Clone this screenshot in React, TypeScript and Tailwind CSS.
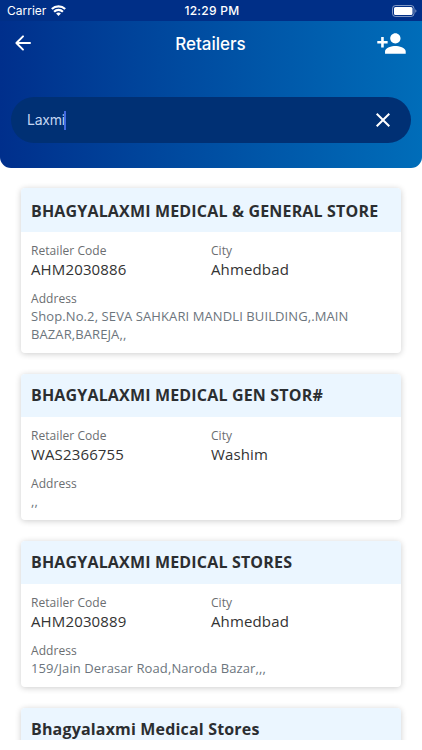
import React from "react";

type Retailer = { name: string; code: string; city: string; address: string; height: string; heading: string };

const retailers: Retailer[] = [
  { name: "BHAGYALAXMI MEDICAL & GENERAL STORE", code: "AHM2030886", city: "Ahmedbad", address: "Shop.No.2, SEVA SAHKARI MANDLI BUILDING,.MAIN BAZAR,BAREJA,,", height: "h-[165px]", heading: "h-[44px] leading-[46px]" },
  { name: "BHAGYALAXMI MEDICAL GEN STOR#", code: "WAS2366755", city: "Washim", address: ",,", height: "h-[146px]", heading: "h-[43px] leading-[43px]" },
  { name: "BHAGYALAXMI MEDICAL STORES", code: "AHM2030889", city: "Ahmedbad", address: "159/Jain Derasar Road,Naroda Bazar,,,", height: "h-[146px]", heading: "h-[43px] leading-[43px]" },
  { name: "Bhagyalaxmi Medical Stores", code: "", city: "", address: "", height: "h-[146px]", heading: "h-[43px] leading-[43px]" },
];

function StatusBar() {
  return (
    <div className="grid h-[21px] grid-cols-3 items-center bg-[#002f87] pl-[7px] pr-[5px] text-[12px] text-white">
      <div className="flex items-center gap-[5px]">
        <span className="pt-px text-[12px] leading-[18px]">Carrier</span>
        <svg width="15" height="11" viewBox="0 0 15 11" fill="none" stroke="white" strokeWidth="2.1">
          <path d="M0.8 4.1a9.6 9.6 0 0 1 13.4 0" />
          <path d="M3.1 6.7a6.2 6.2 0 0 1 8.8 0" />
          <path d="M7.5 11 5.1 8.6a3.4 3.4 0 0 1 4.8 0z" fill="white" stroke="none" />
        </svg>
      </div>
      <span className="pt-px text-center text-[12px] leading-[18px] font-medium tracking-[0.3px]">12:29 PM</span>
      <svg className="justify-self-end" width="25" height="12" viewBox="0 0 25 12">
        <rect x="0.5" y="0.5" width="21.5" height="11" rx="3" fill="none" stroke="white" strokeOpacity="0.5" />
        <rect x="2" y="2" width="18.5" height="8" rx="1.5" fill="white" />
        <path d="M23.3 4.3c1.5.4 1.5 3 0 3.4z" fill="white" fillOpacity="0.5" />
      </svg>
    </div>
  );
}

function Header() {
  return (
    <header className="h-[168px] shrink-0 overflow-hidden rounded-b-[11px] bg-linear-to-r from-[#002f8c] to-[#006db9]">
      <StatusBar />
      <div className="grid h-[44px] grid-cols-3 items-center pl-[11px] pr-[15px]">
        <svg width="24" height="24" viewBox="0 0 24 24" fill="white">
          <path d="M19 11H7.83l4.88-4.88a1 1 0 0 0 0-1.41 1 1 0 0 0-1.41 0l-6.59 6.59a1 1 0 0 0 0 1.41l6.59 6.59a1 1 0 0 0 1.41-1.41L7.83 13H19a1 1 0 0 0 0-2z" />
        </svg>
        <h1 className="pl-[3px] pt-px text-center text-[17px] leading-[24px] font-medium text-white">Retailers</h1>
        <svg className="justify-self-end" width="31" height="31" viewBox="0 0 24 24" fill="white">
          <path d="M15 12c2.21 0 4-1.79 4-4s-1.79-4-4-4-4 1.790-4 4 1.790 4 4 4zm-9-2V7H4v3H1v2h3v3h2v-3h3v-2H6zm9 4c-2.670 0-8 1.340-8 4v2h16v-2c0-2.660-5.330-4-8-4z" />
        </svg>
      </div>
      <div className="mx-[11px] mt-[32px] flex h-[46px] items-center justify-between rounded-full bg-[#003074] pl-[16px] pr-[16px]">
        <div className="flex items-center text-[14px] text-[#c3d6f2]">
          <span className="-mt-px tracking-[-0.25px]">Laxmi</span>
          <span className="-ml-px h-[19px] w-[2px] bg-[#4169e0]" />
        </div>
        <svg width="24" height="24" viewBox="0 0 24 24" fill="white">
          <path d="M19 6.410 17.590 5 12 10.590 6.410 5 5 6.410 10.590 12 5 17.590 6.410 19 12 13.410 17.590 19 19 17.590 13.410 12z" />
        </svg>
      </div>
    </header>
  );
}

function Card({ r }: { r: Retailer }) {
  return (
    <article className={`${r.height} shrink-0 overflow-hidden rounded-[4px] bg-white shadow-[0_1px_6px_rgba(0,0,0,0.2)]`}>
      <h2 className={`${r.heading} whitespace-nowrap bg-[#ebf6ff] pl-[10px] text-[16px] font-bold tracking-[0.17px] text-[#2b2e31]`}>{r.name}</h2>
      {r.code && (
        <div className="px-[10px] pt-[10px]">
          <div className="grid grid-cols-2">
            <div>
              <div className="text-[12px] leading-[18px] tracking-[0.06px] text-[#6b6e71]">Retailer Code</div>
              <div className="text-[15px] leading-[19px] tracking-[0.14px] text-[#333333]">{r.code}</div>
            </div>
            <div>
              <div className="text-[12px] leading-[18px] tracking-[0.06px] text-[#6b6e71]">City</div>
              <div className="text-[15px] leading-[19px] tracking-[0.14px] text-[#333333]">{r.city}</div>
            </div>
          </div>
          <div className="mt-[11px] text-[12px] leading-[18px] tracking-[0.06px] text-[#6b6e71]">Address</div>
          <p className="-mt-px text-[13px] leading-[18px] tracking-[0.1px] text-[#6c757d]">{r.address}</p>
        </div>
      )}
    </article>
  );
}

export default function App() {
  return (
    <div className="h-[750px] w-full bg-white font-['Inter',sans-serif]">
      <div className="flex h-[739.5px] flex-col overflow-hidden">
        <Header />
        <main className="flex flex-col gap-[21px] px-[21px] pt-[20px] font-['Open_Sans',sans-serif]">
          {retailers.map((r) => (
            <Card key={r.name} r={r} />
          ))}
        </main>
      </div>
    </div>
  );
}
